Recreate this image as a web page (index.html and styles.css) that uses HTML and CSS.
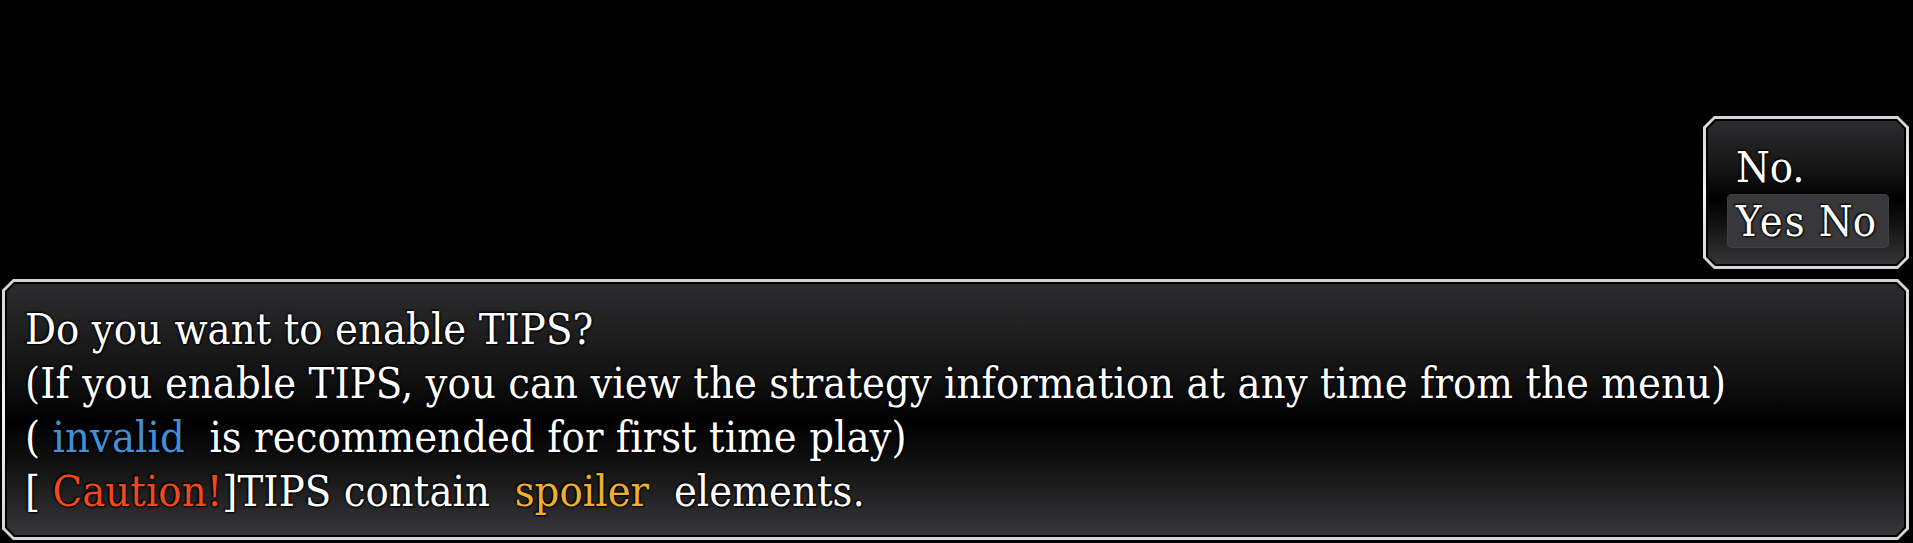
FILE: index.html
```html
<!DOCTYPE html>
<html lang="en">
<head>
<meta charset="utf-8">
<title>TIPS</title>
<link rel="stylesheet" href="styles.css">
</head>
<body>
<div class="screen">
  <div class="win choice">
    <div class="win-inner">
      <div class="win-body choice-body">
        <div class="option">No.</div>
        <div class="option selected"><span class="yes">Yes</span> No</div>
      </div>
    </div>
  </div>
  <div class="win message">
    <div class="win-inner">
      <div class="win-body message-body">
        <div class="line">Do you want to enable TIPS?</div>
        <div class="line">(If you enable TIPS, you can view the strategy information at any time from the menu)</div>
        <div class="line">( <span class="blue">invalid</span>  is recommended for first time play)</div>
        <div class="line">[ <span class="red">Caution!</span>]TIPS contain  <span class="gold">spoiler</span>  elements.</div>
      </div>
    </div>
  </div>
</div>
</body>
</html>
```
FILE: styles.css
```css
html, body {
  margin: 0;
  padding: 0;
  background: #000;
}
body {
  width: 1913px;
  height: 543px;
  overflow: hidden;
  font-family: "DejaVu Serif", "Liberation Serif", serif;
  font-stretch: condensed;
  color: #fff;
}
.screen {
  display: flex;
  flex-direction: column;
  padding: 116px 4px 0 2px;
}
.win {
  --c: 11px;
  background: linear-gradient(#d4d4d4, #f4f4f4 50%, #d4d4d4);
  padding: 3px;
  clip-path: polygon(var(--c) 0, calc(100% - var(--c)) 0, 100% var(--c), 100% calc(100% - var(--c)), calc(100% - var(--c)) 100%, var(--c) 100%, 0 calc(100% - var(--c)), 0 var(--c));
  box-sizing: border-box;
}
.win-inner {
  --c: 9px;
  height: 100%;
  background: #000;
  padding: 2px;
  box-sizing: border-box;
  clip-path: polygon(var(--c) 0, calc(100% - var(--c)) 0, 100% var(--c), 100% calc(100% - var(--c)), calc(100% - var(--c)) 100%, var(--c) 100%, 0 calc(100% - var(--c)), 0 var(--c));
}
.win-body {
  --c: 8px;
  height: 100%;
  box-sizing: border-box;
  background: linear-gradient(#2c2c2e 0%, #111112 38%, #000 55%, #121213 72%, #363638 100%);
  clip-path: polygon(var(--c) 0, calc(100% - var(--c)) 0, 100% var(--c), 100% calc(100% - var(--c)), calc(100% - var(--c)) 100%, var(--c) 100%, 0 calc(100% - var(--c)), 0 var(--c));
}
.choice {
  align-self: flex-end;
  width: 206px;
  height: 153px;
}
.choice-body {
  padding: 19px 0 0 19px;
}
.option {
  width: 162px;
  height: 54px;
  box-sizing: border-box;
  padding-left: 9px;
  font-size: 43px;
  line-height: 54px;
  white-space: pre;
  text-shadow: 0 0 2px #000, 1px 1px 2px #000, -1px -1px 2px #000;
}
.yes {
  letter-spacing: 2px;
}
.option.selected {
  background: #38383a;
  border-radius: 5px;
  box-shadow: inset 0 0 0 1px #404042;
}
.message {
  margin-top: 10px;
  height: 261px;
}
.message-body {
  padding: 18px 0 0 18px;
}
.line {
  font-size: 43px;
  line-height: 54px;
  white-space: pre;
  letter-spacing: 0.07px;
  text-shadow: 0 0 2px #000, 1px 1px 2px #000, -1px -1px 2px #000;
}
.blue { color: #3f8fd9; }
.red { color: #f2481a; }
.gold { color: #eeaf2c; }
```
